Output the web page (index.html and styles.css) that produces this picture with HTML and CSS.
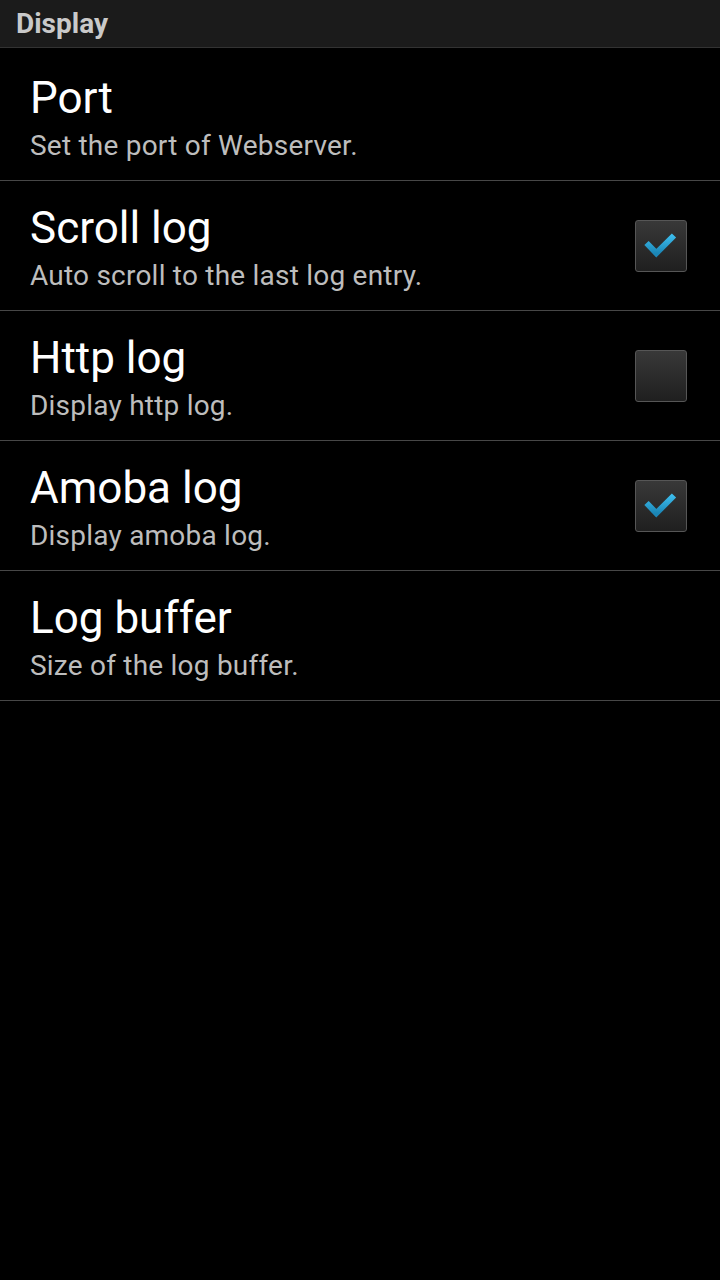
FILE: index.html
```html
<!DOCTYPE html>
<html>
<head>
<meta charset="utf-8">
<link rel="stylesheet" href="styles.css">
</head>
<body>
<div class="screen">
  <div class="section-header">Display</div>
  <div class="pref pref-first">
    <div class="pref-text">
      <div class="pref-title">Port</div>
      <div class="pref-summary">Set the port of Webserver.</div>
    </div>
  </div>
  <div class="pref">
    <div class="pref-text">
      <div class="pref-title">Scroll log</div>
      <div class="pref-summary">Auto scroll to the last log entry.</div>
    </div>
    <div class="checkbox">
      <svg class="check" width="52" height="52" viewBox="0 0 52 52"><defs><linearGradient id="g1" x1="0" y1="0" x2="0" y2="1"><stop offset="0" stop-color="#3cbcec"/><stop offset="1" stop-color="#1b86b6"/></linearGradient></defs><polyline points="11.5,23 21.3,33.2 39,15.5" fill="none" stroke="url(#g1)" stroke-width="6"/></svg>
    </div>
  </div>
  <div class="pref">
    <div class="pref-text">
      <div class="pref-title">Http log</div>
      <div class="pref-summary">Display http log.</div>
    </div>
    <div class="checkbox"></div>
  </div>
  <div class="pref">
    <div class="pref-text">
      <div class="pref-title">Amoba log</div>
      <div class="pref-summary">Display amoba log.</div>
    </div>
    <div class="checkbox">
      <svg class="check" width="52" height="52" viewBox="0 0 52 52"><defs><linearGradient id="g2" x1="0" y1="0" x2="0" y2="1"><stop offset="0" stop-color="#3cbcec"/><stop offset="1" stop-color="#1b86b6"/></linearGradient></defs><polyline points="11.5,23 21.3,33.2 39,15.5" fill="none" stroke="url(#g2)" stroke-width="6"/></svg>
    </div>
  </div>
  <div class="pref">
    <div class="pref-text">
      <div class="pref-title">Log buffer</div>
      <div class="pref-summary">Size of the log buffer.</div>
    </div>
  </div>
</div>
</body>
</html>
```
FILE: styles.css
```css
html, body {
  margin: 0;
  padding: 0;
  background: #000;
}
body {
  font-family: Roboto, "Liberation Sans", sans-serif;
  width: 720px;
  height: 1280px;
  overflow: hidden;
}
.screen {
  display: flex;
  flex-direction: column;
}
.section-header {
  height: 47px;
  line-height: 47px;
  background: #1b1b1b;
  border-bottom: 1px solid #333333;
  color: #c9c9c9;
  font-weight: bold;
  font-size: 28px;
  padding-left: 16px;
}
.pref {
  display: flex;
  align-items: center;
  padding: 21px 33px 12px 30px;
  border-bottom: 1px solid #474747;
}
.pref-first {
  padding-top: 24px;
}
.pref-text {
  flex: 1;
  display: flex;
  flex-direction: column;
}
.pref-title {
  color: #ffffff;
  font-size: 44px;
  line-height: 52px;
}
.pref-summary {
  color: #bdbdbd;
  font-size: 28px;
  line-height: 44px;
  letter-spacing: 0.22px;
}
.checkbox {
  width: 50px;
  height: 50px;
  border: 1px solid #565656;
  border-radius: 3px;
  background: linear-gradient(to bottom, #383838, #1f1f1f);
  position: relative;
  margin-top: -8px;
}
.check {
  position: absolute;
  left: -1px;
  top: -1px;
}
```
